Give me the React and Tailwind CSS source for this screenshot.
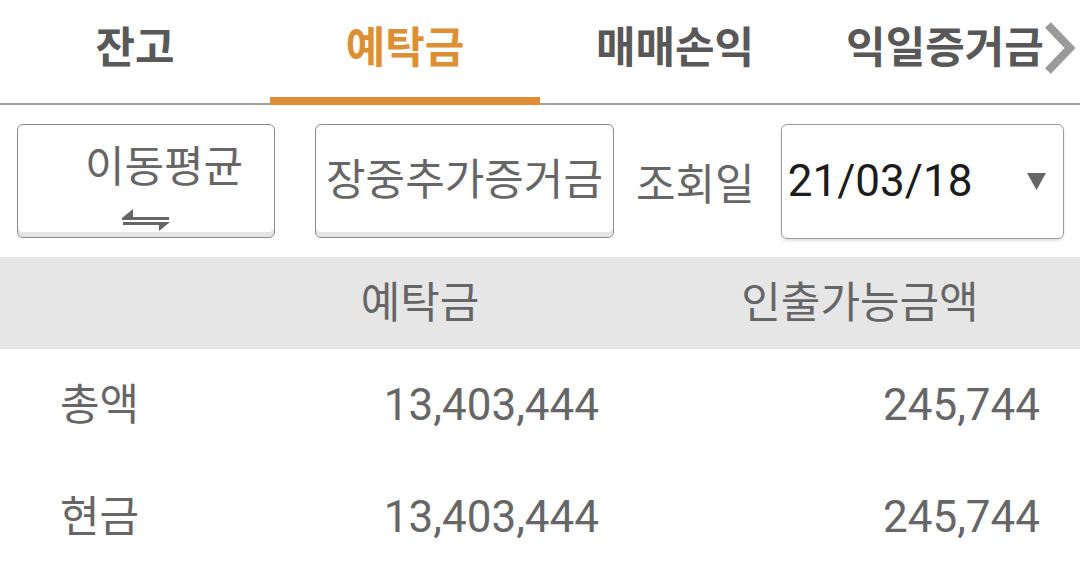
import React from 'react';

const tabs = ['잔고', '예탁금', '매매손익', '익일증거금'];

const rows = [
  { label: '총액', deposit: '13,403,444', withdraw: '245,744' },
  { label: '현금', deposit: '13,403,444', withdraw: '245,744' },
];

const SwapIcon = () => (
  <svg width="48" height="22" viewBox="0 0 48 22" fill="#666">
    {/* top line with half head pointing left */}
    <polygon points="0,9 11,0 11,8 47,8 47,11 0,11" />
    {/* bottom line with half head pointing right */}
    <polygon points="1,13 48,13 37,22 37,16 1,16" />
  </svg>
);

const App = () => {
  return (
    <div
      className="w-[1080px] h-[569px] bg-white overflow-hidden"
      style={{ fontFamily: 'Roboto, "Noto Sans CJK KR", sans-serif' }}
    >
      {/* Tabs */}
      <div className="relative h-[105px] grid grid-cols-4 border-b-2 border-[#a0a0a0]">
        {tabs.map((t, i) => (
          <div key={t} className="relative flex items-start justify-center pt-[27px]">
            <span
              className={
                'text-[43px] leading-none font-bold ' +
                (i === 1 ? 'text-[#dc9035]' : 'text-[#585858]')
              }
            >
              {t}
            </span>
            {i === 1 && (
              <div className="absolute left-0 right-0 bottom-[-2px] h-[8px] bg-[#de8f35]" />
            )}
          </div>
        ))}
        <svg
          className="absolute right-[4px] top-[22px]"
          width="32"
          height="52"
          viewBox="0 0 32 52"
          fill="none"
        >
          <polyline points="4,3 26,26 4,49" stroke="#9a9a9a" strokeWidth="8" />
        </svg>
      </div>

      {/* Controls */}
      <div className="flex items-center pl-[17px] pt-[19px] h-[133px]">
        <div className="w-[258px] h-[114px] rounded-[6px] border-[1.5px] border-[#8a8a8a] shadow-[inset_0_-5px_0_#e4e4e4] flex flex-col items-center pt-[21px]">
          <span className="ml-[36px] text-[43px] leading-none text-[#666]">이동평균</span>
          <div className="mt-[20px]">
            <SwapIcon />
          </div>
        </div>
        <div className="ml-[40px] w-[299px] h-[114px] rounded-[6px] border-[1.5px] border-[#8a8a8a] shadow-[inset_0_-5px_0_#e4e4e4] flex items-center justify-center pb-[2px]">
          <span className="text-[43px] leading-none text-[#666]">장중추가증거금</span>
        </div>
        <span className="ml-[22px] mt-[8px] text-[43px] leading-none text-[#666]">조회일</span>
        <div className="ml-[26px] w-[283px] h-[115px] rounded-[6px] border border-[#9a9a9a] shadow-[0_2px_3px_rgba(0,0,0,0.12)] flex items-center justify-between pl-[6px] pr-[17px]">
          <span className="text-[44px] leading-none text-[#1c1c1c]">21/03/18</span>
          <svg width="19" height="17" viewBox="0 0 19 17">
            <polygon points="0,0 19,0 9.5,17" fill="#666" />
          </svg>
        </div>
      </div>

      {/* Table header */}
      <div className="mt-[19px] h-[92px] bg-[#e6e6e6] flex items-center text-[43px] leading-none text-[#666]">
        <div className="w-[240px]" />
        <div className="w-[360px] text-center">예탁금</div>
        <div className="flex-1 pl-[40px] text-center">인출가능금액</div>
      </div>

      {/* Rows */}
      {rows.map((r) => (
        <div key={r.label} className="h-[112px] flex items-center text-[#666] leading-none">
          <div className="w-[240px] pl-[60px] text-[43px]">{r.label}</div>
          <div className="w-[360px] text-right pr-[1px] text-[44px]">{r.deposit}</div>
          <div className="flex-1 text-right pr-[40px] text-[44px]">{r.withdraw}</div>
        </div>
      ))}
    </div>
  );
};

export default App;
